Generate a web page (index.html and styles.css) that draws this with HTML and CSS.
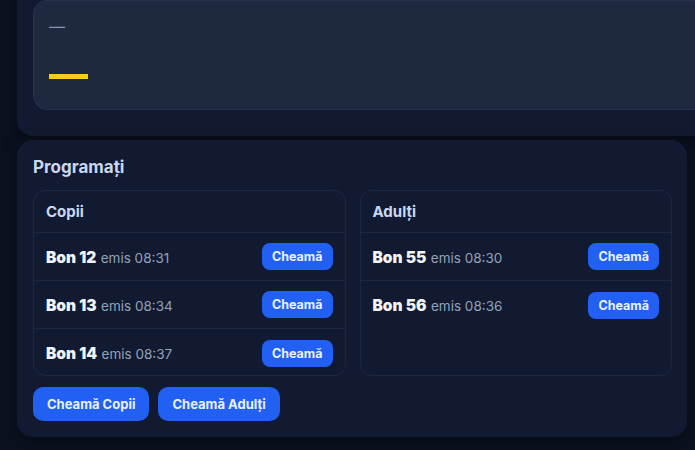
FILE: index.html
```html
<!DOCTYPE html>
<html lang="ro">
<head>
<meta charset="utf-8">
<link rel="stylesheet" href="styles.css">
</head>
<body>
<div class="page">
  <section class="card card-top">
    <div class="display">
      <div class="dash">—</div>
      <div class="bar"></div>
    </div>
  </section>

  <section class="card card-sched">
    <h2 class="title">Programați</h2>
    <div class="cols">
      <div class="col">
        <div class="col-head">Copii</div>
        <div class="row"><span class="bon"><b>Bon 12</b> <span class="emis">emis 08:31</span></span><button class="btn">Cheamă</button></div>
        <div class="row"><span class="bon"><b>Bon 13</b> <span class="emis">emis 08:34</span></span><button class="btn">Cheamă</button></div>
        <div class="row"><span class="bon"><b>Bon 14</b> <span class="emis">emis 08:37</span></span><button class="btn">Cheamă</button></div>
      </div>
      <div class="col">
        <div class="col-head">Adulți</div>
        <div class="row"><span class="bon"><b>Bon 55</b> <span class="emis">emis 08:30</span></span><button class="btn">Cheamă</button></div>
        <div class="row"><span class="bon"><b>Bon 56</b> <span class="emis">emis 08:36</span></span><button class="btn">Cheamă</button></div>
      </div>
    </div>
    <div class="actions">
      <button class="btn btn-lg">Cheamă Copii</button>
      <button class="btn btn-lg">Cheamă Adulți</button>
    </div>
  </section>
</div>
</body>
</html>
```

FILE: styles.css
```css
* { box-sizing: border-box; }
html, body {
  margin: 0;
  height: 100%;
  background: #0b1120;
  overflow: hidden;
}
body {
  font-family: "Inter", "Liberation Sans", sans-serif;
  color: #e2e8f0;
}
.page {
  display: flex;
  flex-direction: column;
  gap: 4px;
  padding: 0 8px 0 17px;
}
.card {
  background: #111a30;
  border-radius: 16px;
  box-shadow: 0 6px 18px rgba(0, 0, 0, 0.35);
}
.card-top {
  margin-top: -16px;
  margin-right: -40px;
  padding: 16px 16px 26px 16px;
}
.display {
  height: 110px;
  background: #1e293f;
  border: 1px solid #263350;
  border-radius: 14px;
  padding: 17px 15px 0 15px;
}
.dash {
  font-size: 16px;
  line-height: 16px;
  color: #8a96ab;
  height: 20px;
}
.bar {
  margin-top: 36px;
  width: 39px;
  height: 5px;
  background: #facc15;
}
.card-sched {
  padding: 16px 15px 16px 16px;
}
.title {
  margin: 0 0 12px 0;
  font-size: 17px;
  line-height: 22px;
  font-weight: 700;
  color: #c9d8f0;
}
.cols {
  display: grid;
  grid-template-columns: 1fr 1fr;
  gap: 14px;
}
.col {
  border: 1px solid #1c2740;
  border-radius: 12px;
  height: 186px;
}
.col-head {
  height: 42px;
  display: flex;
  align-items: center;
  padding: 0 12px;
  font-size: 15px;
  font-weight: 700;
  color: #c9d8f0;
  border-bottom: 1px solid #1c2740;
}
.row {
  height: 48px;
  display: flex;
  align-items: center;
  justify-content: space-between;
  padding: 0 12px;
  border-bottom: 1px solid #1c2740;
}
.col .row:last-child { border-bottom: none; }
.bon b {
  font-weight: 900;
  font-size: 15.5px;
  color: #f1f5f9;
}
.emis {
  font-size: 13.5px;
  color: #94a3b8;
}
.btn {
  font-family: "Inter", "Liberation Sans", sans-serif;
  background: #2160f3;
  color: #eaf1ff;
  border: none;
  border-radius: 8px;
  font-size: 12.5px;
  font-weight: 700;
  height: 27px;
  padding: 0 10px;
}
.actions {
  display: flex;
  gap: 9px;
  margin-top: 11px;
}
.btn-lg {
  height: 34px;
  border-radius: 10px;
  padding: 0 14px;
  font-size: 13px;
}
```
